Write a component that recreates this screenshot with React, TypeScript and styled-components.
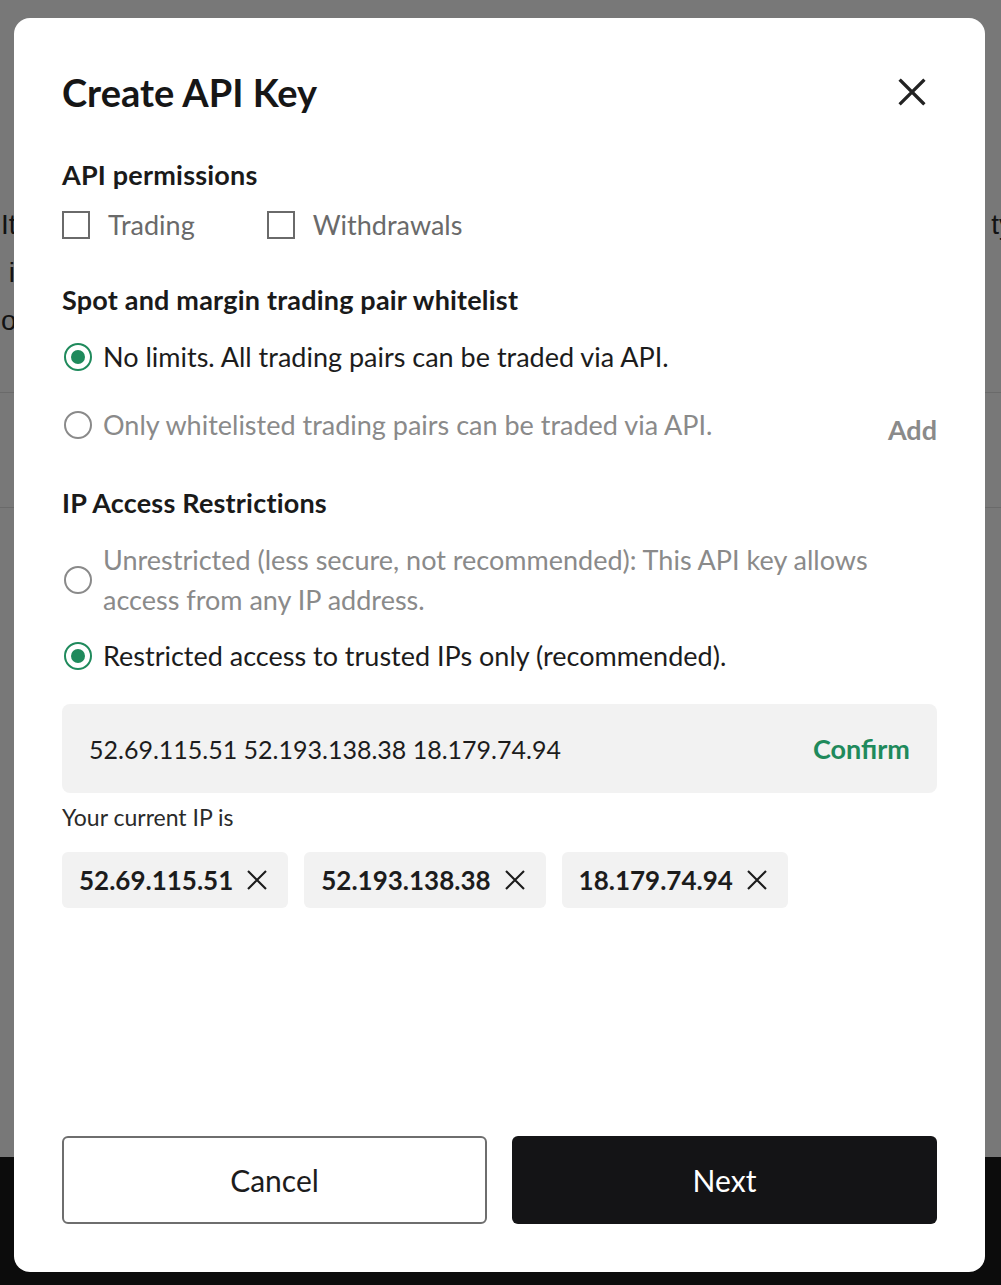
import styled, { createGlobalStyle } from "styled-components";

const GlobalStyle = createGlobalStyle`
  html, body {
    margin: 0;
    padding: 0;
  }
  body {
    font-family: Lato, "Noto Sans", sans-serif;
    background: #fff;
  }
  * {
    box-sizing: border-box;
  }
`;

const green = "#1f8a5c";

function CloseIcon({ size, stroke }: { size: number; stroke: number }) {
  return (
    <svg width={size} height={size} viewBox="0 0 24 24" fill="none">
      <path
        d="M3 3L21 21M21 3L3 21"
        stroke="currentColor"
        strokeWidth={stroke}
        strokeLinecap="square"
      />
    </svg>
  );
}

function App() {
  const chips = ["52.69.115.51", "52.193.138.38", "18.179.74.94"];

  return (
    <>
      <GlobalStyle />
      <Page>
        <PageLine>
          <span>It</span>
          <span>ty</span>
        </PageLine>
        <PageLine>
          <span>&nbsp;i</span>
        </PageLine>
        <PageLine>
          <span>o</span>
        </PageLine>
        <TableBlock />
        <Spacer />
        <Footer />
      </Page>
      <Overlay>
        <Modal>
          <Header>
            <Title>Create API Key</Title>
            <CloseButton aria-label="close">
              <CloseIcon size={30} stroke={2.6} />
            </CloseButton>
          </Header>

          <SectionTitle $top={35}>API permissions</SectionTitle>
          <CheckRow>
            <CheckItem>
              <CheckBox />
              <span>Trading</span>
            </CheckItem>
            <CheckItem>
              <CheckBox />
              <span>Withdrawals</span>
            </CheckItem>
          </CheckRow>

          <SectionTitle $top={35}>Spot and margin trading pair whitelist</SectionTitle>
          <RadioRow $top={17}>
            <Radio $on />
            <RadioText $on>No limits. All trading pairs can be traded via API.</RadioText>
          </RadioRow>
          <RadioRow $top={26}>
            <Radio />
            <RadioText>Only whitelisted trading pairs can be traded via API.</RadioText>
            <AddLink>Add</AddLink>
          </RadioRow>

          <SectionTitle $top={37}>IP Access Restrictions</SectionTitle>
          <RadioRow $top={17}>
            <Radio />
            <RadioText>
              Unrestricted (less secure, not recommended): This API key allows
              access from any IP address.
            </RadioText>
          </RadioRow>
          <RadioRow $top={16}>
            <Radio $on />
            <RadioText $on>Restricted access to trusted IPs only (recommended).</RadioText>
          </RadioRow>

          <IpInput>
            <IpValue>52.69.115.51 52.193.138.38 18.179.74.94</IpValue>
            <ConfirmLink>Confirm</ConfirmLink>
          </IpInput>
          <Hint>Your current IP is</Hint>
          <ChipList>
            {chips.map((ip) => (
              <Chip key={ip}>
                <span>{ip}</span>
                <CloseIcon size={22} stroke={2.3} />
              </Chip>
            ))}
          </ChipList>

          <Footbar>
            <CancelButton>Cancel</CancelButton>
            <NextButton>Next</NextButton>
          </Footbar>
        </Modal>
      </Overlay>
    </>
  );
}

export default App;

const Page = styled.div`
  width: 1001px;
  height: 1285px;
  display: flex;
  flex-direction: column;
  padding-top: 205px;
  font-family: "Liberation Sans", Arial, sans-serif;
  font-size: 28px;
  color: #2a2a2a;
  overflow: hidden;
`;

const PageLine = styled.div`
  display: flex;
  justify-content: space-between;
  height: 48px;
  line-height: 40px;
  padding: 0 0 0 1px;
  margin-right: -12px;
`;

const TableBlock = styled.div`
  margin-top: 43px;
  height: 116px;
  border-top: 1px solid #e2e2e2;
  border-bottom: 1px solid #e2e2e2;
`;

const Spacer = styled.div`
  flex: 1;
`;

const Footer = styled.div`
  height: 128px;
  background: #1a1a1a;
`;

const Overlay = styled.div`
  position: fixed;
  inset: 0;
  background: rgba(0, 0, 0, 0.53);
  display: flex;
  justify-content: flex-start;
  align-items: flex-start;
  padding: 18px 0 0 14px;
`;

const Modal = styled.div`
  width: 971px;
  height: 1254px;
  background: #fff;
  border-radius: 16px;
  padding: 48px 48px 48px 48px;
  display: flex;
  flex-direction: column;
  font-family: Lato, "Noto Sans", sans-serif;
  color: #1e1e1e;
`;

const Header = styled.div`
  display: flex;
  justify-content: space-between;
  align-items: center;
  height: 56px;
  margin-top: -2px;
`;

const Title = styled.h1`
  margin: 0;
  font-size: 38px;
  font-weight: 700;
  color: #161616;
`;

const CloseButton = styled.button`
  border: none;
  background: none;
  padding: 0;
  margin: 0 10px 0 0;
  color: #222;
  display: flex;
  cursor: pointer;
`;

const SectionTitle = styled.h2<{ $top?: number }>`
  margin: ${(p) => p.$top ?? 28}px 0 0;
  font-size: 27px;
  font-weight: 700;
  letter-spacing: 0.2px;
  line-height: 40px;
  color: #1a1a1a;
`;

const CheckRow = styled.div`
  display: flex;
  gap: 72px;
  margin-top: 10px;
`;

const CheckItem = styled.label`
  display: flex;
  align-items: center;
  gap: 18px;
  font-size: 27px;
  line-height: 40px;
  color: #6a6a6a;
`;

const CheckBox = styled.span`
  width: 28px;
  height: 28px;
  border: 2px solid #6a6a6a;
`;

const RadioRow = styled.div<{ $top?: number }>`
  display: flex;
  align-items: center;
  gap: 11px;
  margin-top: ${(p) => p.$top ?? 0}px;
  padding-left: 2px;
`;

const Radio = styled.span<{ $on?: boolean }>`
  flex: none;
  width: 28px;
  height: 28px;
  border-radius: 50%;
  border: 2.5px solid ${(p) => (p.$on ? green : "#8a8a8a")};
  display: flex;
  align-items: center;
  justify-content: center;
  &::after {
    content: "";
    width: 14px;
    height: 14px;
    border-radius: 50%;
    background: ${(p) => (p.$on ? green : "transparent")};
  }
`;

const RadioText = styled.span<{ $on?: boolean }>`
  flex: 1;
  font-size: 27px;
  line-height: 40px;
  color: ${(p) => (p.$on ? "#1c1c1c" : "#8a8a8a")};
`;

const AddLink = styled.span`
  font-size: 27px;
  font-weight: 700;
  color: #8a8a8a;
  margin-top: 10px;
`;

const IpInput = styled.div`
  margin-top: 28px;
  height: 89px;
  background: #f2f2f2;
  border-radius: 8px;
  display: flex;
  align-items: center;
  justify-content: space-between;
  padding: 0 27px;
`;

const IpValue = styled.span`
  font-size: 25px;
  color: #1c1c1c;
`;

const ConfirmLink = styled.span`
  font-size: 27px;
  font-weight: 700;
  color: ${green};
`;

const Hint = styled.div`
  margin-top: 10px;
  font-size: 23px;
  line-height: 28px;
  color: #2a2a2a;
`;

const ChipList = styled.div`
  display: flex;
  gap: 16px;
  margin-top: 21px;
`;

const Chip = styled.div`
  height: 56px;
  display: flex;
  align-items: center;
  gap: 13px;
  padding: 0 20px 0 17px;
  background: #f2f2f2;
  border-radius: 6px;
  font-size: 26px;
  font-weight: 700;
  color: #1c1c1c;
`;

const Footbar = styled.div`
  margin-top: auto;
  display: grid;
  grid-template-columns: 1fr 1fr;
  gap: 25px;
`;

const ButtonBase = styled.button`
  height: 88px;
  border-radius: 6px;
  font-family: Lato, "Noto Sans", sans-serif;
  font-size: 30px;
  cursor: pointer;
`;

const CancelButton = styled(ButtonBase)`
  background: #fff;
  border: 2px solid #6e6e6e;
  color: #1c1c1c;
`;

const NextButton = styled(ButtonBase)`
  background: #141416;
  border: none;
  color: #fff;
`;
